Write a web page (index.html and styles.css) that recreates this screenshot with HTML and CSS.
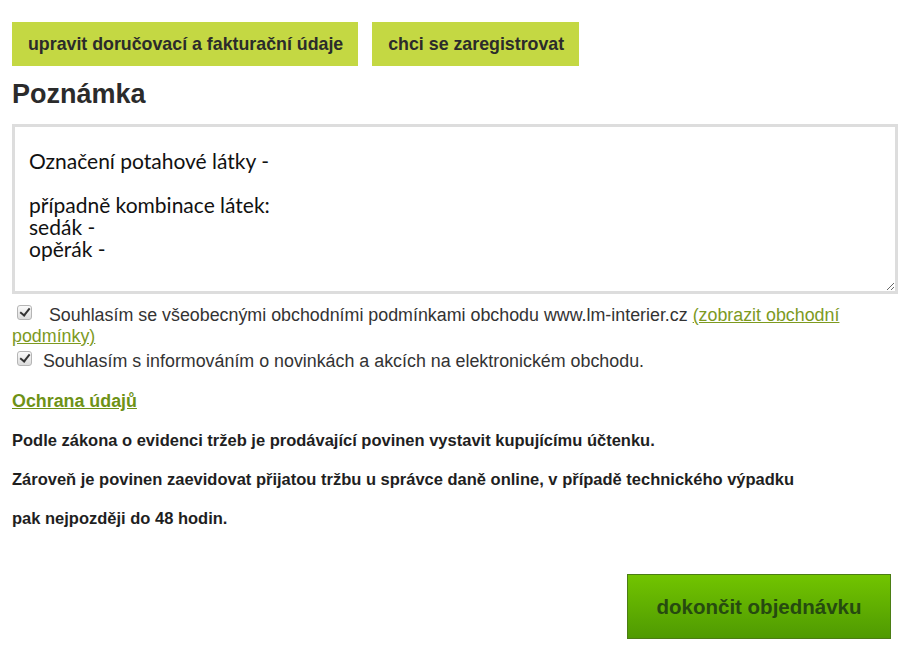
FILE: index.html
```html
<!DOCTYPE html>
<html lang="cs">
<head>
	<meta charset="UTF-8">
	<meta name="viewport" content="width=device-width, initial-scale=1.0">
	<title>Objednávka</title>
	<link rel="stylesheet" href="styles.css">
</head>
<body>
	<div class="page">
		<div class="top-buttons">
			<a class="btn-light" href="#">upravit doručovací a fakturační údaje</a>
			<a class="btn-light" href="#">chci se zaregistrovat</a>
		</div>
		<h2 class="title">Poznámka</h2>
		<textarea class="note">Označení potahové látky -

případně kombinace látek:
sedák -
opěrák -</textarea>
		<div class="agree first">
			<input type="checkbox" checked>
			<span class="agree-text">Souhlasím se všeobecnými obchodními podmínkami obchodu www.lm-interier.cz <a href="#">(zobrazit obchodní podmínky)</a></span>
		</div>
		<div class="agree second">
			<input type="checkbox" checked>
			<span>Souhlasím s informováním o novinkách a akcích na elektronickém obchodu.</span>
		</div>
		<p class="privacy"><a href="#">Ochrana údajů</a></p>
		<p class="info">Podle zákona o evidenci tržeb je prodávající povinen vystavit kupujícímu účtenku.</p>
		<p class="info">Zároveň je povinen zaevidovat přijatou tržbu u správce daně online, v případě technického výpadku</p>
		<p class="info">pak nejpozději do 48 hodin.</p>
		<div class="finish">
			<button class="btn-finish">dokončit objednávku</button>
		</div>
	</div>
</body>
</html>
```

FILE: styles.css
```css
body{
	margin: 0;
	background: #fff;
	font-family: "Liberation Sans", Arial, sans-serif;
	color: #2b2b2b;
}
.page{
	padding: 22px 7px 0 12px;
}
.top-buttons{
	display: flex;
	gap: 14px;
}
.btn-light{
	display: block;
	height: 44px;
	line-height: 44px;
	padding: 0 15px 0 16px;
	background-color: #c4d843;
	color: #2b2b2b;
	font-weight: bold;
	font-size: 17.8px;
	text-decoration: none;
}
.title{
	margin: 13px 0 15px;
	font-size: 27px;
	line-height: 30px;
	color: #2b2b2b;
}
.note{
	display: block;
	box-sizing: border-box;
	width: 886px;
	height: 170px;
	margin: 0;
	padding: 23px 14px 0;
	border: 3px solid #dddddd;
	font-family: Lato, "Noto Sans", sans-serif;
	font-size: 21px;
	line-height: 22px;
	color: #111;
	resize: both;
	outline: none;
}
.agree{
	font-size: 17.85px;
	line-height: 21px;
	color: #333;
}
.agree input{
	appearance: none;
	position: relative;
	box-sizing: border-box;
	width: 15px;
	height: 15px;
	margin: 0 6px 0 5px;
	vertical-align: 1px;
	border: 1px solid #b5b5b5;
	border-radius: 3px;
	background: linear-gradient(#fafafa, #dcdcdc);
}
.agree input:checked::after{
	content: "";
	position: absolute;
	left: 4px;
	top: 0px;
	width: 4px;
	height: 8px;
	border: solid #333;
	border-width: 0 2.5px 2.5px 0;
	transform: rotate(38deg);
}
.agree.first{
	margin-top: 11px;
}
.agree.first input{
	margin-right: 12px;
}
.agree.second{
	margin-top: 4px;
}
.agree a{
	color: #7d9a1f;
}
.privacy{
	margin: 19px 0 0;
	font-size: 17.85px;
	line-height: 21px;
	font-weight: bold;
}
.privacy a{
	color: #6e9216;
}
.info{
	margin: 19px 0 0;
	font-size: 16.5px;
	line-height: 20px;
	font-weight: bold;
	color: #1f1f1f;
}
.privacy + .info{
	margin-top: 18px;
}
.finish{
	display: flex;
	justify-content: flex-end;
	margin-top: 46px;
	padding-right: 7px;
}
.btn-finish{
	width: 264px;
	height: 65px;
	border: 1px solid #4b7d14;
	background: linear-gradient(#72c400, #4f9a02);
	color: #264a10;
	font-family: "Liberation Sans", Arial, sans-serif;
	font-weight: bold;
	font-size: 20.5px;
}
```
